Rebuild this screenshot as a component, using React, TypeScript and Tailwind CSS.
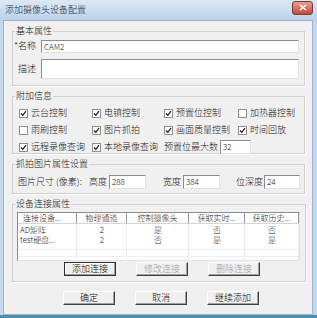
import React from "react";

const Check = ({ on }: { on: boolean }) => (
	<span className="w-[9px] h-[9px] border border-[#8e8f8f] bg-white flex items-center justify-center shrink-0">
		{on && (
			<svg width="7" height="7" viewBox="0 0 7 7">
				<path d="M1 3.5 L2.8 5.3 L6 1.2" stroke="#222" strokeWidth="1.3" fill="none" />
			</svg>
		)}
	</span>
);

const Box = ({ label, on }: { label: string; on: boolean }) => (
	<div className="flex items-center gap-[3px] h-[12px]">
		<Check on={on} />
		<span>{label}</span>
	</div>
);

const Input = ({ value, className }: { value?: string; className: string }) => (
	<div
		className={`bg-white border border-t-[#8c8c8c] border-l-[#8c8c8c] border-r-[#e4e4e4] border-b-[#e4e4e4] text-[8px] pl-[2px] leading-[11px] ${className}`}
	>
		{value}
	</div>
);

const Btn = ({
	label,
	disabled,
	focus,
}: {
	label: string;
	disabled?: boolean;
	focus?: boolean;
}) => (
	<div
		className={`w-[52px] h-[14px] flex items-center justify-center bg-[#f0f0f0] border ${
			focus
				? "border-[#303030] shadow-[inset_-1px_-1px_#a0a0a0,inset_1px_1px_#ffffff]"
				: "border-t-white border-l-white border-r-[#404040] border-b-[#404040] shadow-[inset_-1px_-1px_#a0a0a0]"
		} ${disabled ? "text-[#a0a0a0]" : "text-[#111]"}`}
	>
		{label}
	</div>
);

const Group = ({
	title,
	className,
	children,
}: {
	title: string;
	className: string;
	children: React.ReactNode;
}) => (
	<fieldset className={`border border-[#d0d0d0] shadow-[1px_1px_#ffffff] mx-[8px] mr-[7px] ${className}`}>
		<legend className="ml-[2px] px-[1px] leading-[12px]">{title}</legend>
		{children}
	</fieldset>
);

const cols = ["w-[59px]", "w-[50px]", "w-[62px]", "w-[56px]", "w-[54px]"];
const head = ["连接设备...", "物理通道", "控制摄像头", "获取实时...", "获取历史..."];
const rows = [
	["AD矩阵", "2", "是", "否", "否"],
	["test硬盘...", "2", "否", "是", "是"],
];

export default function App() {
	return (
		<div className="w-[317px] h-[318px] flex flex-col bg-[#c3d7ed] border-b-[3px] border-b-[#4a8fab] font-['Noto_Sans_CJK_SC',sans-serif] font-light text-[9px] text-[#1a1a1a] overflow-hidden">
			<div className="h-[20px] shrink-0 flex items-center justify-between pl-[5px] pr-[4px] bg-gradient-to-b from-[#dde8f5] to-[#bcd2ea]">
				<span className="text-[9px] text-[#1e2a3a]">添加摄像头设备配置</span>
				<div className="w-[21px] h-[14px] -mt-[5px] rounded-[3px] border border-[#7d3a33] bg-gradient-to-b from-[#e5a190] to-[#c2473a] flex items-center justify-center">
					<svg width="8" height="7" viewBox="0 0 8 7">
						<path d="M1 1 L7 6 M7 1 L1 6" stroke="#ffffff" strokeWidth="1.6" />
					</svg>
				</div>
			</div>
			<div className="flex-1 mx-[3px] mr-[4px] bg-[#f0f0f0] border border-[#9cb3cb] flex flex-col pt-[4px]">
				<Group title="基本属性" className="h-[61px]">
					<div className="flex items-center h-[14px] mt-[2px] pr-[5px]">
						<span className="w-[28px] pl-[1px]">*名称</span>
						<Input value="CAM2" className="flex-1 h-[13px]" />
					</div>
					<div className="flex items-center mt-[6px] pr-[5px]">
						<span className="w-[28px] pl-[5px]">描述</span>
						<Input className="flex-1 h-[20px]" />
					</div>
				</Group>
				<Group title="附加信息" className="h-[64px] mt-[4px]">
					<div className="grid grid-cols-[73px_72px_74px_1fr] pl-[6px] gap-y-[5px] mt-[5px]">
						<Box label="云台控制" on />
						<Box label="电镇控制" on />
						<Box label="预置位控制" on />
						<Box label="加热器控制" on={false} />
						<Box label="雨刷控制" on={false} />
						<Box label="图片抓拍" on />
						<Box label="画面质量控制" on />
						<Box label="时间回放" on />
						<Box label="远程录像查询" on />
						<Box label="本地录像查询" on />
						<div className="col-span-2 flex items-center h-[12px] gap-[2px]">
							<span>预置位最大数</span>
							<Input value="32" className="w-[31px] h-[14px]" />
						</div>
					</div>
				</Group>
				<Group title="抓拍图片属性设置" className="h-[36px] mt-[4px]">
					<div className="flex items-center h-[14px] mt-[5px] pl-[5px]">
						<span className="w-[71px]">图片尺寸 (像素):</span>
						<span className="w-[20px]">高度</span>
						<Input value="288" className="w-[37px] h-[14px]" />
						<span className="w-[20px] ml-[17px]">宽度</span>
						<Input value="384" className="w-[37px] h-[14px]" />
						<span className="w-[28px] ml-[16px]">位深度</span>
						<Input value="24" className="w-[36px] h-[14px]" />
					</div>
				</Group>
				<Group title="设备连接属性" className="h-[84px] mt-[4px]">
					<div className="mx-[4px] mr-[5px] mt-[2px] h-[49px] bg-white border border-t-[#8c8c8c] border-l-[#8c8c8c] border-r-[#e4e4e4] border-b-[#e4e4e4] overflow-hidden">
						<div className="flex h-[11px] border-b border-[#d5d5d5] text-[8px] leading-[10px]">
							{head.map((h, i) => (
								<div
									key={h}
									className={`${cols[i]} border-r border-[#9a9a9a] ${i === 0 ? "pl-[5px]" : "text-center"}`}
								>
									{h}
								</div>
							))}
						</div>
						<div className="relative h-[38px]">
							<div className="absolute inset-0 flex pointer-events-none">
								{cols.map((c) => (
									<div key={c} className={`${c} border-r border-[#ececec]`} />
								))}
							</div>
							<div className="absolute left-0 right-0 top-[24px] border-t border-[#f0f0f0]" />
							<div className="absolute left-0 right-0 top-[31px] border-t border-[#f0f0f0]" />
							{rows.map((r, j) => (
								<div key={j} className="relative flex h-[9px] text-[8px] leading-[9px] mt-[1px]">
									{r.map((v, i) => (
										<div key={i} className={`${cols[i]} ${i === 0 ? "pl-[2px]" : "text-center"}`}>
											{v}
										</div>
									))}
								</div>
							))}
						</div>
					</div>
					<div className="flex gap-[20px] ml-[51px] mt-[1px]">
						<Btn label="添加连接" focus />
						<Btn label="修改连接" disabled />
						<Btn label="删除连接" disabled />
					</div>
				</Group>
				<div className="flex gap-[20px] ml-[59px] mt-[9px]">
					<Btn label="确定" />
					<Btn label="取消" />
					<Btn label="继续添加" />
				</div>
			</div>
		</div>
	);
}
